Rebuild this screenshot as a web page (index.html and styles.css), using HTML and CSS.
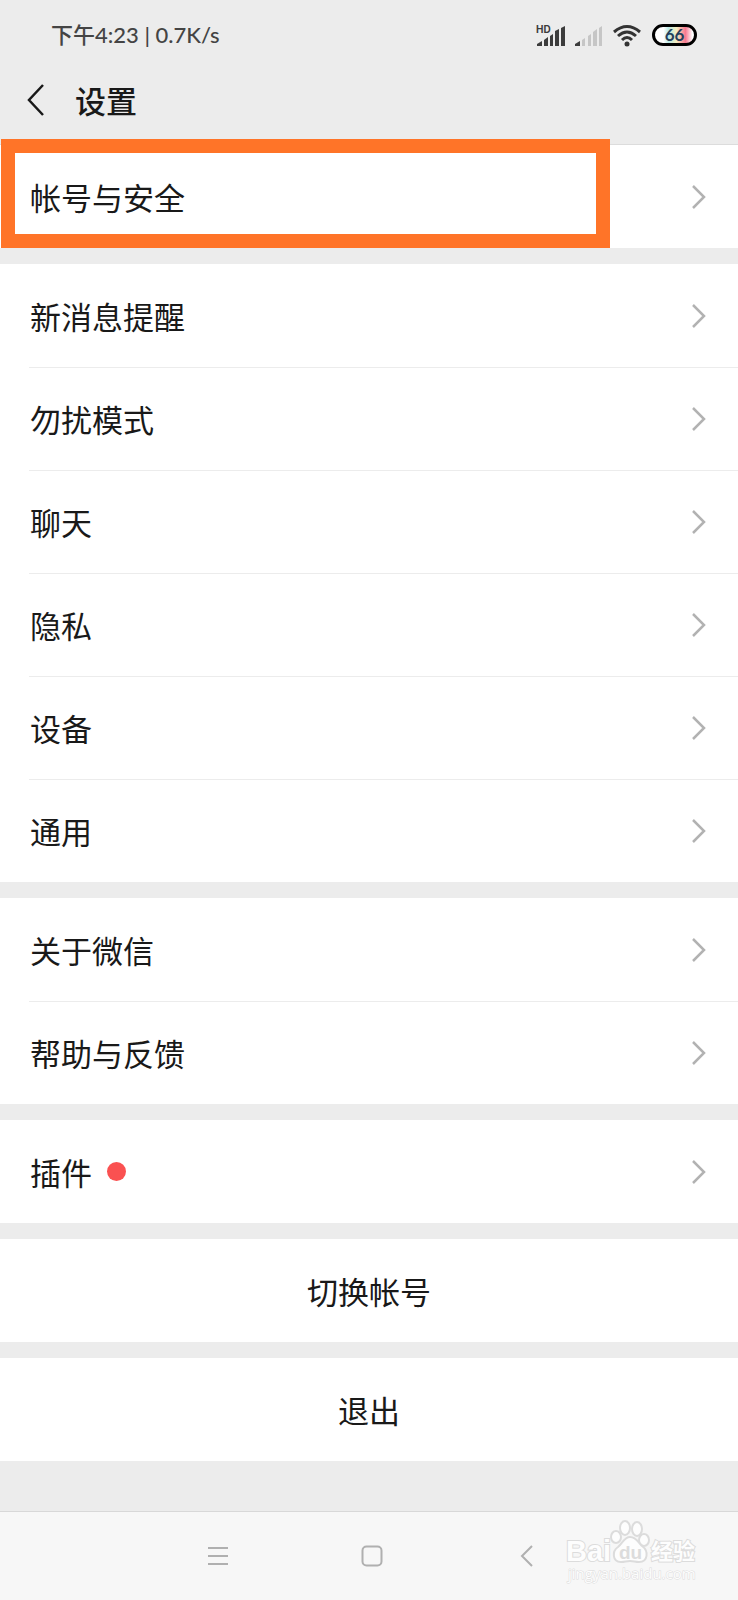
FILE: index.html
```html
<!DOCTYPE html>
<html lang="zh-CN">
	<head>
		<meta charset="UTF-8">
		<meta name="viewport" content="width=device-width, initial-scale=1.0">
		<title>设置</title>
		<link rel="stylesheet" href="styles.css">
	</head>
	<body>
	<svg class="defs" aria-hidden="true">
		<symbol id="chevron" viewBox="0 0 16 26">
			<path d="M3 2 L14 13 L3 24" fill="none" stroke="#b2b2b2" stroke-width="2.5"/>
		</symbol>
	</svg>
	<div class="status">
		<span class="status-text">下午4:23 | 0.7K/s</span>
		<div class="status-icons">
			<svg width="29" height="24" viewBox="0 0 29 24">
				<text class="hd" x="0" y="10">HD</text>
				<g fill="#3c3c3c">
					<path d="M1 23 V21 L6 18 V23 Z"/>
					<path d="M8 23 V17 L12 14 V23 Z"/>
					<path d="M14 23 V13 L17 11 V23 Z"/>
					<path d="M19 23 V8 L23 6 V23 Z"/>
					<path d="M25 23 V5 L29 3 V23 Z"/>
				</g>
			</svg>
			<svg width="27" height="24" viewBox="0 0 27 24">
				<path d="M0 23 V21 L5 18 V23 Z" fill="#3c3c3c"/>
				<g fill="#c6c6c6">
					<path d="M7 23 V17 L10 15 V23 Z"/>
					<path d="M13 23 V13 L16 11 V23 Z"/>
					<path d="M18 23 V9 L22 6 V23 Z"/>
					<path d="M24 23 V5 L27 3 V23 Z"/>
				</g>
			</svg>
			<svg width="30" height="24" viewBox="0 0 30 24">
				<g fill="none" stroke="#333" stroke-width="3">
					<path d="M2 9 Q15 -2 28 9"/>
					<path d="M6 13 Q15 5 24 13"/>
					<path d="M10 17 Q15 12 20 17"/>
				</g>
				<circle cx="15" cy="21" r="2.5" fill="#333"/>
			</svg>
			<span class="battery">66</span>
		</div>
	</div>
	<header class="header">
		<button class="back" type="button" aria-label="返回">
			<svg width="18" height="32" viewBox="0 0 18 32"><path d="M16 1 L2 16 L16 31" fill="none" stroke="#191919" stroke-width="2.5"/></svg>
		</button>
		<h1>设置</h1>
	</header>
	<main class="settings">
		<nav class="group">
			<a class="row highlighted" href="#account">帐号与安全<svg class="chevron"><use href="#chevron"/></svg></a>
		</nav>
		<nav class="group">
			<a class="row" href="#notify">新消息提醒<svg class="chevron"><use href="#chevron"/></svg></a>
			<a class="row" href="#dnd">勿扰模式<svg class="chevron"><use href="#chevron"/></svg></a>
			<a class="row" href="#chat">聊天<svg class="chevron"><use href="#chevron"/></svg></a>
			<a class="row" href="#privacy">隐私<svg class="chevron"><use href="#chevron"/></svg></a>
			<a class="row" href="#device">设备<svg class="chevron"><use href="#chevron"/></svg></a>
			<a class="row" href="#general">通用<svg class="chevron"><use href="#chevron"/></svg></a>
		</nav>
		<nav class="group">
			<a class="row" href="#about">关于微信<svg class="chevron"><use href="#chevron"/></svg></a>
			<a class="row" href="#help">帮助与反馈<svg class="chevron"><use href="#chevron"/></svg></a>
		</nav>
		<nav class="group">
			<a class="row" href="#plugins">插件<span class="dot"></span><svg class="chevron"><use href="#chevron"/></svg></a>
		</nav>
		<button class="action" type="button">切换帐号</button>
		<button class="action" type="button">退出</button>
	</main>
	<footer class="navbar">
		<button type="button" aria-label="菜单">
			<svg width="22" height="22" viewBox="0 0 22 22"><path d="M1 3 H21 M1 11 H21 M1 19 H21" stroke="#b0b0b0" stroke-width="2"/></svg>
		</button>
		<button type="button" aria-label="主页">
			<svg width="22" height="22" viewBox="0 0 22 22"><rect x="1.5" y="1.5" width="19" height="19" rx="4" fill="none" stroke="#b0b0b0" stroke-width="2"/></svg>
		</button>
		<button type="button" aria-label="返回">
			<svg width="22" height="22" viewBox="0 0 22 22"><path d="M17 1 L7 11 L17 21" fill="none" stroke="#b0b0b0" stroke-width="2"/></svg>
		</button>
		<svg class="watermark" width="136" height="66" viewBox="0 0 136 66">
			<g fill="#fdfdfd" stroke="#dcdcdc" stroke-width="2">
				<text class="wm-brand" x="1" y="42">Bai</text>
				<ellipse cx="51" cy="18" rx="5" ry="6"/>
				<ellipse cx="60" cy="9" rx="5" ry="7"/>
				<ellipse cx="72" cy="10" rx="5" ry="7"/>
				<ellipse cx="79" cy="21" rx="5" ry="6"/>
				<path d="M65 18 C71 18 73 23 77 27 C84 32 83 43 74 43 C70 43 69 42 65 42 C61 42 60 43 56 43 C47 43 47 32 53 28 C58 24 59 18 65 18 Z"/>
				<text class="wm-du" x="54" y="40">du</text>
				<text class="wm-cn" x="86" y="40">经验</text>
				<text class="wm-url" x="3" y="60">jingyan.baidu.com</text>
			</g>
		</svg>
	</footer>
	</body>
</html>
```
FILE: styles.css
```css
* {
	box-sizing: border-box;
}

body {
	margin: 0;
	min-height: 100vh;
	display: flex;
	flex-direction: column;
	background-color: #ececec;
	color: #191919;
	font-family: "Noto Sans CJK SC", sans-serif;
}

button {
	border: 0;
	padding: 0;
	background: none;
	color: inherit;
	font-family: inherit;
}

svg {
	display: block;
}

.defs {
	position: absolute;
	width: 0;
	height: 0;
}

.status {
	height: 70px;
	padding: 0 41px 0 51px;
	display: flex;
	align-items: center;
	justify-content: space-between;
}

.status-text {
	padding-bottom: 4px;
	color: #444;
	font-family: Lato, "Noto Sans CJK SC", sans-serif;
	font-size: 22px;
	font-weight: 500;
}

.status-icons {
	display: flex;
	align-items: center;
	gap: 10px;
}

.hd {
	fill: #3c3c3c;
	font: bold 10px Inter, sans-serif;
}

.battery {
	width: 45px;
	height: 22px;
	border: 3px solid #000;
	border-radius: 11px;
	background: linear-gradient(90deg, #fff 22%, #b9e8e4 35%, #f5efc0 55%, #f87890 78%, #fff 96%);
	color: #24405c;
	font: bold 17px/16px Lato, sans-serif;
	text-align: center;
}

.header {
	height: 75px;
	padding: 0 27px 14px;
	display: flex;
	align-items: center;
	gap: 30px;
	border-bottom: 1px solid #dcdcdc;
}

h1 {
	margin: 0;
	font-size: 31px;
	font-weight: 500;
	line-height: 44px;
}

.settings {
	display: flex;
	flex-direction: column;
	gap: 16px;
}

.group {
	background-color: #fff;
}

.row {
	position: relative;
	height: 103px;
	padding: 0 32px 0 30px;
	display: flex;
	align-items: center;
	color: inherit;
	font-size: 31px;
	text-decoration: none;
}

/* divider starts under the label, not at the edge */
.row + .row::before {
	content: "";
	position: absolute;
	top: 0;
	left: 29px;
	right: 0;
	height: 1px;
	background-color: #ececec;
}

.highlighted::after {
	content: "";
	position: absolute;
	top: -6px;
	bottom: 0;
	left: 1px;
	right: 128px;
	border: 14px solid #ff7428;
}

.chevron {
	width: 16px;
	height: 26px;
	margin-left: auto;
}

.dot {
	width: 19px;
	height: 19px;
	margin-left: 15px;
	border-radius: 50%;
	background-color: #fa5151;
}

.action {
	height: 103px;
	background-color: #fff;
	font-size: 31px;
}

.navbar {
	position: relative;
	height: 89px;
	margin-top: auto;
	padding-left: 6px;
	display: flex;
	align-items: center;
	justify-content: center;
	gap: 132px;
	border-top: 1px solid #d8d8d8;
	background-color: #f7f7f7;
}

.watermark {
	position: absolute;
	right: 37px;
	top: 7px;
}

.watermark text {
	paint-order: stroke;
}

.wm-brand {
	font: bold 29px "Liberation Sans", sans-serif;
}

.watermark .wm-du {
	fill: #dcdcdc;
	stroke: none;
	font: bold 19px "Liberation Sans", sans-serif;
}

.wm-cn {
	font: bold 22px "Noto Sans CJK SC", sans-serif;
}

.wm-url {
	stroke-width: 1px;
	font: 15px "Open Sans", sans-serif;
}
```
